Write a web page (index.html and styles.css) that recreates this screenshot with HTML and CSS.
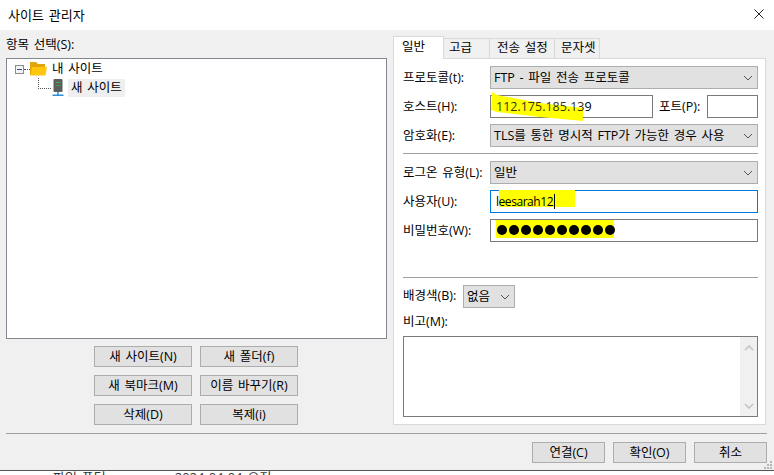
FILE: index.html
```html
<!DOCTYPE html>
<html lang="ko">
<head>
<meta charset="utf-8">
<title>사이트 관리자</title>
<link rel="stylesheet" href="styles.css">
</head>
<body>
<div class="window">
  <header class="titlebar">
    <span>사이트 관리자</span>
    <svg class="close" width="10" height="10" viewBox="0 0 10 10"><path d="M0.5 0.5 L9.5 9.5 M9.5 0.5 L0.5 9.5" stroke="#222" stroke-width="1" fill="none"/></svg>
  </header>
  <main class="client">
    <div class="panes">
      <section class="left">
        <div class="pane-label">항목 선택(S):</div>
        <div class="tree">
          <div class="tree-row root">
            <span class="expander"><i></i></span>
            <span class="dots-h short"></span>
            <svg class="folder" width="17" height="14" viewBox="0 0 17 14"><path d="M0 0 H6 L8 2 H15 V13 H0 Z" fill="#e3a50e"/><path d="M0.5 13.5 L2 5 H17 L15.5 13.5 Z" fill="#ffc60d"/></svg>
            <span class="tree-text">내 사이트</span>
          </div>
          <div class="tree-row child">
            <span class="elbow"></span>
            <svg class="server" width="12" height="18" viewBox="0 0 12 18"><rect x="1.5" y="0" width="9" height="13" rx="1" fill="#5d5d5d"/><rect x="3.5" y="3" width="5" height="1" fill="#39b54a"/><rect x="3.5" y="6" width="5" height="1" fill="#39a04a"/><rect x="5.25" y="13" width="1.5" height="3" fill="#2f8fd6"/><rect x="0.5" y="15.5" width="11" height="1.5" fill="#2f8fd6"/></svg>
            <span class="tree-text selected">새 사이트</span>
          </div>
        </div>
        <div class="tree-buttons">
          <button class="btn">새 사이트(N)</button>
          <button class="btn">새 폴더(f)</button>
          <button class="btn">새 북마크(M)</button>
          <button class="btn">이름 바꾸기(R)</button>
          <button class="btn">삭제(D)</button>
          <button class="btn">복제(i)</button>
        </div>
      </section>
      <section class="right">
        <nav class="tabs">
          <span class="tab active">일반</span>
          <span class="tab t2">고급</span>
          <span class="tab t3">전송 설정</span>
          <span class="tab t4">문자셋</span>
        </nav>
        <div class="panel">
          <div class="form">
            <label>프로토콜(t):</label>
            <div class="select">FTP - 파일 전송 프로토콜<svg class="chev" width="10" height="6" viewBox="0 0 10 6"><path d="M1 1 L5 5 L9 1" stroke="#555" fill="none"/></svg></div>
            <label>호스트(H):</label>
            <div class="host-line">
              <div class="input host"><svg class="hl-host" width="93" height="32" viewBox="0 0 93 32"><path d="M1 2 L6 5 L49 13 L92 18 L92 31 L49 27 L6 22 L0 20 Z" fill="#ffff00"/></svg><span class="value"><span class="marked">112.175.185.13</span>9</span></div>
              <label class="port-label">포트(P):</label>
              <div class="input port"></div>
            </div>
            <label>암호화(E):</label>
            <div class="select">TLS를 통한 명시적 FTP가 가능한 경우 사용<svg class="chev" width="10" height="6" viewBox="0 0 10 6"><path d="M1 1 L5 5 L9 1" stroke="#555" fill="none"/></svg></div>
          </div>
          <hr class="rule first">
          <div class="form">
            <label>로그온 유형(L):</label>
            <div class="select">일반<svg class="chev" width="10" height="6" viewBox="0 0 10 6"><path d="M1 1 L5 5 L9 1" stroke="#555" fill="none"/></svg></div>
            <label>사용자(U):</label>
            <div class="input focused"><span class="hl-user"></span><span class="value user">leesarah12</span><span class="caret"></span></div>
            <label>비밀번호(W):</label>
            <div class="input pass"><span class="dots"><b></b><b></b><b></b><b></b><b></b><b></b><b></b><b></b><b></b><b></b></span></div>
          </div>
          <hr class="rule second">
          <div class="bg-row">
            <label>배경색(B):</label>
            <div class="select small">없음<svg class="chev" width="10" height="6" viewBox="0 0 10 6"><path d="M1 1 L5 5 L9 1" stroke="#555" fill="none"/></svg></div>
          </div>
          <label class="memo-label">비고(M):</label>
          <div class="memo">
            <div class="scrollbar">
              <svg width="10" height="6" viewBox="0 0 10 6"><path d="M1 5 L5 1 L9 5" stroke="#c4c4c4" stroke-width="1.6" fill="none"/></svg>
              <svg width="10" height="6" viewBox="0 0 10 6"><path d="M1 1 L5 5 L9 1" stroke="#c4c4c4" stroke-width="1.6" fill="none"/></svg>
            </div>
          </div>
        </div>
      </section>
    </div>
    <hr class="rule bottom">
    <footer class="actions">
      <button class="btn wide">연결(C)</button>
      <button class="btn wide">확인(O)</button>
      <button class="btn wide">취소</button>
    </footer>
    <svg class="grip" width="10" height="10" viewBox="0 0 10 10"><g fill="#b5b5b5"><rect x="7" y="1" width="2" height="2"/><rect x="4" y="4" width="2" height="2"/><rect x="7" y="4" width="2" height="2"/><rect x="1" y="7" width="2" height="2"/><rect x="4" y="7" width="2" height="2"/><rect x="7" y="7" width="2" height="2"/></g></svg>
  </main>
</div>
<div class="behind"><span class="behind-a">파일 폴더</span><span class="behind-b">2024-04-04 오전</span></div>
</body>
</html>
```
FILE: styles.css
```css
* { box-sizing: border-box; }
html, body { margin: 0; padding: 0; }
body {
  width: 774px;
  height: 475px;
  overflow: hidden;
  background: #fff;
  color: #000;
  font-family: "Open Sans", "Noto Sans CJK KR", sans-serif;
  font-size: 12.5px;
  line-height: 17px;
  word-spacing: 1.5px;
}
.window {
  height: 471px;
  display: flex;
  flex-direction: column;
  border-bottom: 1px solid #555;
}
.titlebar {
  height: 30px;
  flex: none;
  background: #fff;
  display: flex;
  align-items: center;
  justify-content: space-between;
  padding: 0 10px 0 8px;
  font-size: 13px;
}
.close { margin-top: -2px; }
.client {
  flex: 1;
  position: relative;
  background: #f0f0f0;
  padding: 6px 7px 0 6px;
  display: flex;
  flex-direction: column;
}
.panes {
  display: flex;
  gap: 6px;
  height: 389px;
}
.left { width: 381px; display: flex; flex-direction: column; }
.pane-label { height: 22px; }
.tree {
  height: 282px;
  background: #fff;
  border: 1px solid #828790;
  padding: 1px 0 0 8px;
}
.tree-row { display: flex; align-items: center; height: 19px; }
.expander {
  width: 9px;
  height: 9px;
  border: 1px solid #8c8c8c;
  background: #f4f4f4;
  display: flex;
  align-items: center;
  justify-content: center;
  flex: none;
}
.expander i { width: 5px; height: 1px; background: #2c4f96; display: block; }
.dots-h.short { width: 6px; border-top: 1px dotted #555; flex: none; }
.folder { flex: none; }
.root .tree-text { margin-left: 2px; }
.tree-text { padding: 0 3px; height: 18px; line-height: 17px; }
.tree-row.child { padding-left: 37px; position: relative; height: 18px; }
.elbow {
  position: absolute;
  left: 23px;
  top: -1px;
  width: 13px;
  height: 11px;
  border-left: 1px dotted #555;
  border-bottom: 1px dotted #555;
}
.server { flex: none; margin-right: 4px; }
.selected { background: #efefef; }
.tree-buttons {
  display: grid;
  grid-template-columns: 98px 98px;
  grid-auto-rows: 21px;
  column-gap: 8px;
  row-gap: 8px;
  justify-content: start;
  margin: 7px 0 0 88px;
}
.btn {
  font: inherit;
  word-spacing: inherit;
  color: #000;
  background: #e1e1e1;
  border: 1px solid #adadad;
  border-radius: 0;
  padding: 0;
  height: 21px;
  line-height: 17px;
}
.right { width: 373px; display: flex; flex-direction: column; }
.tabs { display: flex; height: 22px; align-items: flex-end; position: relative; z-index: 1; }
.tab {
  height: 20px;
  border: 1px solid #d9d9d9;
  border-bottom: 0;
  border-left: 0;
  background: #f0f0f0;
  line-height: 18px;
  white-space: nowrap;
}
.tab.active {
  width: 51px;
  height: 23px;
  background: #fff;
  border-left: 1px solid #d9d9d9;
  margin-bottom: -1px;
  padding: 1px 0 0 8px;
}
.t2 { width: 46px; padding-left: 5px; }
.t3 { width: 65px; padding-left: 7px; }
.t4 { width: 45px; padding-left: 6px; }
.panel {
  height: 367px;
  background: #fff;
  border: 1px solid #d9d9d9;
  padding: 7px 7px 0 9px;
}
.form {
  display: grid;
  grid-template-columns: 87px 268px;
  grid-auto-rows: 23px;
  row-gap: 6px;
  align-items: center;
}
label { display: block; white-space: nowrap; }
.select {
  height: 23px;
  background: #e1e1e1;
  border: 1px solid #adadad;
  display: flex;
  align-items: center;
  justify-content: space-between;
  padding: 0 4px 0 3px;
  line-height: 19px;
}
.input {
  height: 23px;
  background: #fff;
  border: 1px solid #7a7a7a;
  display: flex;
  align-items: center;
  position: relative;
  padding-left: 5px;
}
.input .value { position: relative; }
.marked { color: #34340a; }
.value.user { font-size: 12px; letter-spacing: -0.45px; }
.host-line { display: flex; align-items: center; height: 23px; }
.host { width: 163px; }
.port-label { margin-left: 6px; width: 48px; }
.port { width: 51px; }
.hl-host { position: absolute; left: 0; top: -6px; }
.focused { border-color: #0078d7; }
.hl-user { position: absolute; left: 8px; top: -1px; width: 76px; height: 17px; background: #ffff00; }
.caret { width: 1px; height: 15px; background: #000; margin-left: 1px; position: relative; }
.dots {
  display: flex;
  gap: 2px;
  background: #ffff00;
  padding: 1px 0 0 1px;
  width: 118px;
  height: 18px;
  align-items: center;
  align-self: flex-start;
}
.dots b { width: 10px; height: 10px; border-radius: 50%; background: #000; display: block; flex: none; }
.rule { border: 0; border-top: 1px solid #a0a0a0; margin: 0; height: 0; }
.rule.first { margin: 6px 0 7px 0; }
.rule.second { margin-top: 35px; margin-bottom: 7px; }
.bg-row { display: flex; align-items: center; height: 23px; }
.bg-row label { width: 60px; margin-top: -2px; }
.select.small { width: 52px; }
.memo-label { margin-top: 5px; height: 23px; }
.memo {
  height: 81px;
  background: #fff;
  border: 1px solid #7a7a7a;
  display: flex;
  justify-content: flex-end;
}
.scrollbar {
  width: 17px;
  background: #f0f0f0;
  display: flex;
  flex-direction: column;
  justify-content: space-between;
  align-items: center;
  padding: 8px 0 7px;
}
.rule.bottom { margin: 8px 0 0 0; }
.actions {
  display: flex;
  justify-content: flex-end;
  gap: 8px;
  margin-top: 8px;
}
.btn.wide { width: 73px; }
.grip { position: absolute; right: 1px; bottom: 0; }
.behind {
  height: 4px;
  overflow: hidden;
  display: flex;
  font-size: 13px;
  color: #333;
  padding-left: 53px;
}
.behind span { display: block; margin-top: -2px; white-space: nowrap; }
.behind-b { margin-left: 69px; }
```
